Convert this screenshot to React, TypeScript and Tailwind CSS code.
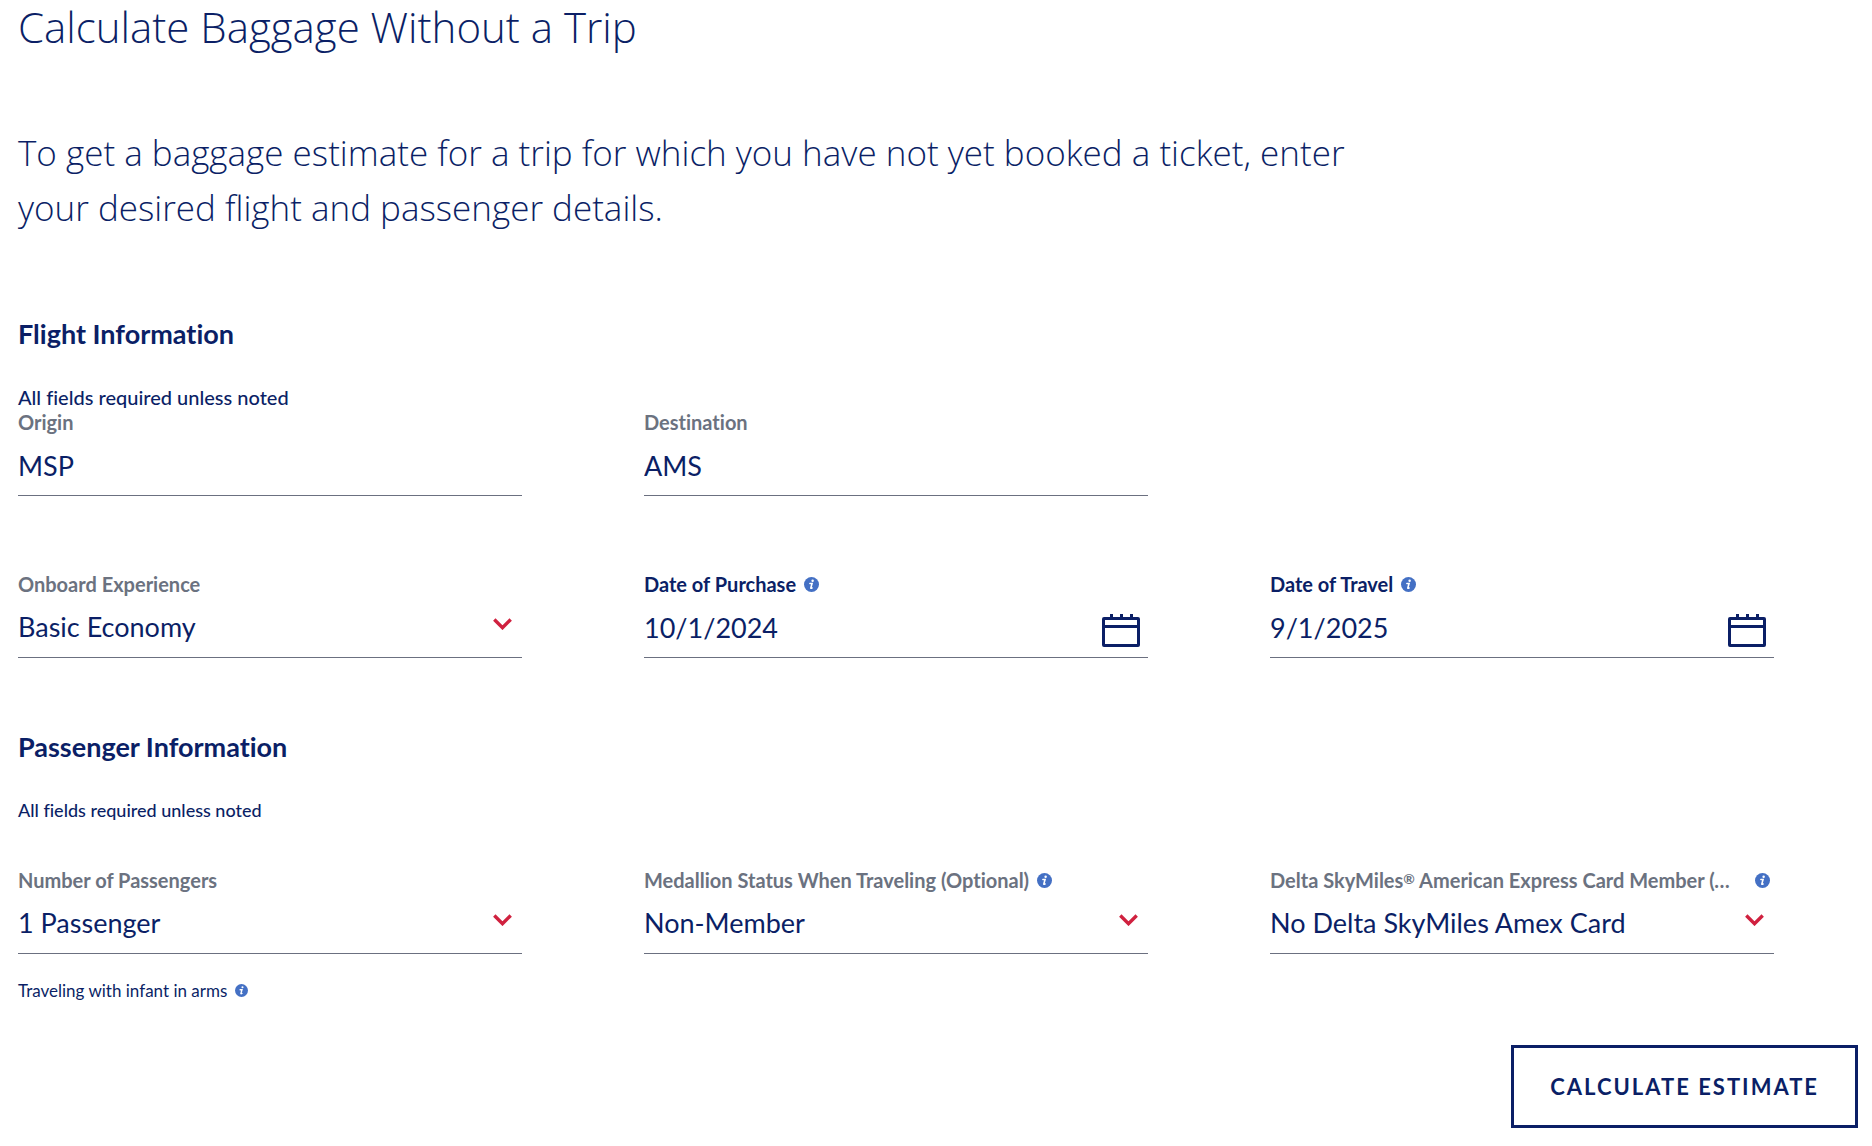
import { ReactNode } from 'react'
import clsx from 'clsx'

const InfoIcon = ({ small }: { small?: boolean }) => (
  <svg viewBox="0 0 16 16" className={clsx('block', small ? 'size-[13px]' : 'size-[15px]')} aria-hidden="true">
    <circle cx="8" cy="8" r="8" fill="#4470c4" />
    <circle cx="9.2" cy="4" r="1.3" fill="#fff" />
    <path d="M6.3 7h2.3L7.3 11.6q-.2.9 1.3.1" fill="none" stroke="#fff" strokeWidth="1.7" strokeLinecap="round" />
  </svg>
)

const ChevronIcon = () => (
  <svg viewBox="0 0 19 12" className="w-[19px] h-3" aria-hidden="true">
    <path d="M1.3 1.5 9.5 9.7l8.2-8.2" fill="none" stroke="#d0213f" strokeWidth="3.4" />
  </svg>
)

const CalendarIcon = () => (
  <svg viewBox="0 0 38 33" className="w-[38px] h-[33px] block" aria-hidden="true">
    <rect x="1.5" y="4.5" width="35" height="27" rx="0.5" fill="none" stroke="#0b1f66" strokeWidth="3" />
    <path d="M1 12.5h36M9.5 0v4M19.5 0v4M29.5 0v4" stroke="#0b1f66" strokeWidth="3" />
  </svg>
)

const InfoButton = ({ about, small }: { about: string, small?: boolean }) => (
  <button type="button" aria-label={`More about ${about}`} className="shrink-0 cursor-pointer">
    <InfoIcon small={small} />
  </button>
)

type FieldProps = {
  id: string
  label: string
  dark?: boolean
  info?: boolean
  spread?: boolean
  children: ReactNode
}

const Field = ({ id, label, dark, info, spread, children }: FieldProps) => {
  // the registered mark is set small and raised
  const [before, after] = label.split('®')
  return (
    <div className="min-w-0">
      <div className={clsx('flex items-center pr-1', spread ? 'gap-6' : 'gap-2')}>
        <label
          htmlFor={id}
          className={clsx('truncate text-[20px] leading-[25px] font-bold', dark ? 'text-[#0b1f66]' : 'text-[#6b7280]')}
        >
          {before}
          {after && <><span className="text-[14px] leading-none align-[4px]">®</span>{after}</>}
        </label>
        {info && <InfoButton about={label} />}
      </div>
      <div className="relative border-b border-[#6b7080]">{children}</div>
    </div>
  )
}

const controlClass = 'block w-full h-[60px] bg-transparent text-[27px] outline-none'

const TextField = ({ id, label, value }: { id: string, label: string, value: string }) => (
  <Field id={id} label={label}>
    <input id={id} type="text" defaultValue={value} className={controlClass} />
  </Field>
)

const DateField = ({ id, label, value }: { id: string, label: string, value: string }) => (
  <Field id={id} label={label} dark info>
    <input id={id} type="text" defaultValue={value} className={controlClass} />
    <button type="button" aria-label={`Choose ${label}`} className="absolute right-2 bottom-[10px] cursor-pointer">
      <CalendarIcon />
    </button>
  </Field>
)

type SelectProps = { id: string, label: string, options: string[], info?: boolean, spread?: boolean }

const SelectField = ({ id, label, options, info, spread }: SelectProps) => (
  <Field id={id} label={label} info={info} spread={spread}>
    <select id={id} className={clsx(controlClass, 'appearance-none')}>
      {options.map((o) => <option key={o}>{o}</option>)}
    </select>
    <span className="absolute right-[10px] bottom-[27px] pointer-events-none">
      <ChevronIcon />
    </span>
  </Field>
)

const App = () => {
  return (
    <main className="bg-white text-[#0b1f66] font-['Lato',sans-serif] [font-variant-ligatures:no-common-ligatures] pl-[18px] pr-[14px] pb-[18px]">
      <h1 className="font-['Open_Sans',sans-serif] text-[42px] leading-[54px] font-light">Calculate Baggage Without a Trip</h1>
      <p className="mt-[71px] max-w-[1360px] font-['Open_Sans',sans-serif] text-[35px] leading-[55px] font-light">
        To get a baggage estimate for a trip for which you have not yet booked a ticket, enter your desired flight and passenger details.
      </p>

      <form onSubmit={(e) => e.preventDefault()}>
        <section className="mt-[81px] pr-[84px]">
          <h2 className="text-[27px] leading-[36px] font-bold">Flight Information</h2>
          <p className="mt-8 text-[20px] leading-[26px] font-medium">All fields required unless noted</p>
          <div className="grid grid-cols-3 gap-x-[122px] gap-y-[76px]">
            <TextField id="origin" label="Origin" value="MSP" />
            <TextField id="destination" label="Destination" value="AMS" />
            <div />
            <SelectField id="experience" label="Onboard Experience" options={['Basic Economy', 'Main Cabin', 'First Class']} />
            <DateField id="purchase" label="Date of Purchase" value="10/1/2024" />
            <DateField id="travel" label="Date of Travel" value="9/1/2025" />
          </div>
        </section>

        <section className="mt-[71px] pr-[84px]">
          <h2 className="text-[27px] leading-[36px] font-bold">Passenger Information</h2>
          <p className="mt-8 text-[18px] leading-[26px] font-medium">All fields required unless noted</p>
          <div className="mt-[45px] grid grid-cols-3 gap-x-[122px]">
            <SelectField id="passengers" label="Number of Passengers" options={['1 Passenger', '2 Passengers', '3 Passengers']} />
            <SelectField id="medallion" label="Medallion Status When Traveling (Optional)" options={['Non-Member', 'Silver', 'Gold']} info />
            <SelectField
              id="card"
              label="Delta SkyMiles® American Express Card Member (Optional)"
              options={['No Delta SkyMiles Amex Card', 'Delta SkyMiles Gold']}
              info
              spread
            />
          </div>
          <div className="mt-6 flex items-center gap-2 text-[17px] leading-[25px]">
            <p>Traveling with infant in arms</p>
            <InfoButton about="Traveling with infant in arms" small />
          </div>
        </section>

        <div className="mt-[42px] flex justify-end">
          <button type="submit" className="h-[83px] px-9 border-3 border-[#0b1f66] text-[22px] font-bold tracking-[2px] cursor-pointer">
            CALCULATE ESTIMATE
          </button>
        </div>
      </form>
    </main>
  )
}

export default App
